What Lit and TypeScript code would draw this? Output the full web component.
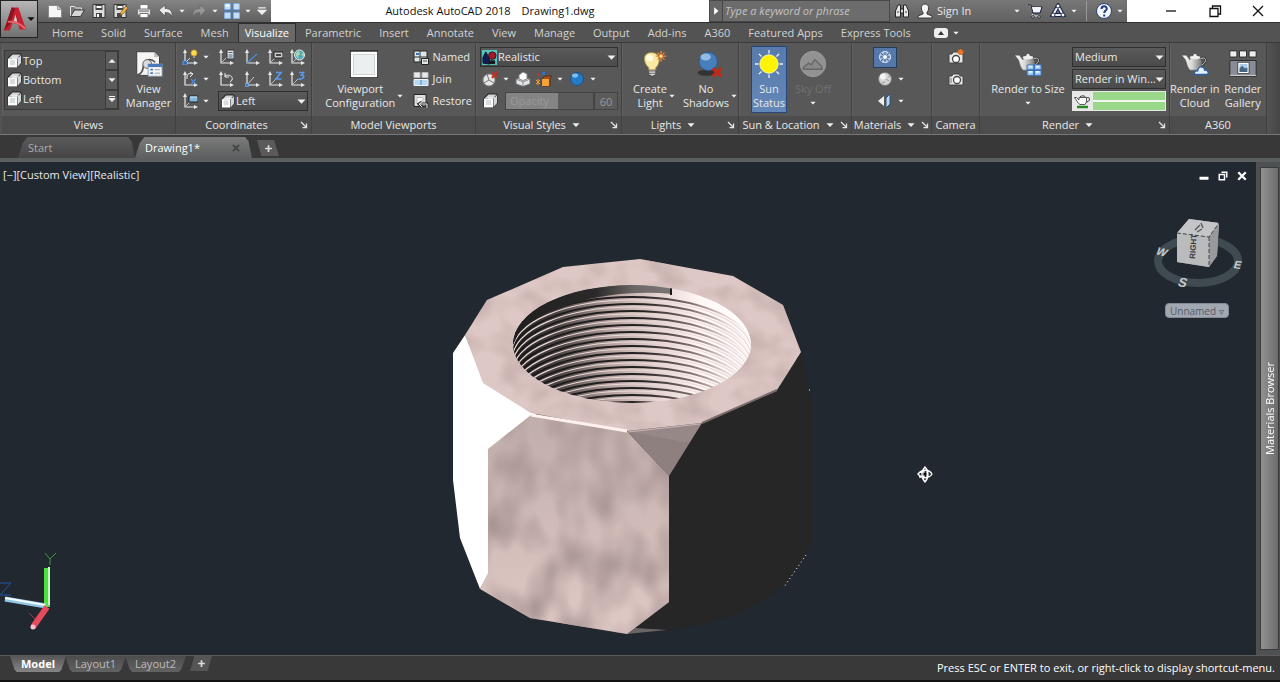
import { LitElement, html, svg, css } from "lit";
import { customElement, state } from "lit/decorators.js";
import { classMap } from "lit/directives/class-map.js";

const axes = svg`<path d="M3 3v11h11" fill="none" stroke="#e6e8ea" stroke-width="1.200"/><path d="M3 0L1 4h4zM16 14l-4-2v4z" fill="#e6e8ea"/>`;
const diag = svg`<path d="M3 14l6-6" stroke="#b9bdc0" fill="none"/>`;
const cube = svg`<path d="M2 5l4-4h9v9l-4 4.500H2z" fill="#2c2c2c" stroke="#202020"/><path d="M2.500 5.500l4-4h8l-3.500 4zM11.500 6l3.500-4v8l-3.500 4z" fill="#d3d7d9"/><path d="M2 5.500h9v9H2z" fill="#fbfbfb"/><path d="M6 5h7" stroke="#fff"/><path d="M4 7h5v5H4z" fill="#d9dcdd"/>`;
const teapot = svg`<path d="M22 8c7-3 9 4 0 8" fill="none" stroke="#3c3c3c" stroke-width="3"/><path d="M22 8c7-3 9 4 0 8" fill="none" stroke="#ddd"/><path d="M1 4l5 0 4 5c3-4 10-4 13 0 2 5 0 10-4 12h-8C7 19 7 13 5 9z" fill="url(#pot)" stroke="#555" stroke-width=".5"/><ellipse cx="16" cy="6.500" rx="6" ry="2" fill="#efefef"/><circle cx="16" cy="4" r="1.800" fill="#eee"/><defs><linearGradient id="pot"><stop stop-color="#fff"/><stop offset=".5" stop-color="#d9d9d7"/><stop offset="1" stop-color="#777"/></linearGradient></defs>`;
const burst = (x: number, y: number) => svg`<path transform="translate(${x} ${y})" d="M0-6V6M-6 0H6M-4-4l8 8M4-4l-8 8" stroke="#f28a30" stroke-width="1.600"/><circle cx=${x} cy=${y} r="2.500" fill="#ffe9a0" stroke="#d04a10"/>`;

const icons: Record<string, unknown> = {
  new: svg`<path d="M1.500 2.500h9l4 4v8h-13z" fill="#f6f6f6" stroke="#888"/><path d="M10.500 2.500v4h4" fill="#ccc" stroke="#999"/>`,
  open: svg`<path d="M1.500 13V3.500h4l1 1.500h6v3" fill="#777" stroke="#e9e9e9"/><path d="M1.500 13.500l4-6.500h10l-4 6.500z" fill="#d6d6d6" stroke="#3d3d3d"/>`,
  save: svg`<path d="M2 1.500h12v13H2z" fill="#ddd" stroke="#333"/><path d="M4.500 2h7v5h-7zM5 10h6v4.500H5z" fill="#454545"/><path d="M5.500 3h5v2h-5zM6 11h2v3H6z" fill="#fff"/>`,
  saveas: svg`<path d="M1 1.500h12v13H1z" fill="#ddd" stroke="#333"/><path d="M3.500 2h7v5h-7zM4 10h5v4.500H4z" fill="#454545"/><path d="M4.500 3h5v2h-5z" fill="#fff"/><path d="M7 12l1-3 5-6 2 2-5 6z" fill="#f4b548" stroke="#684516" stroke-width=".6"/>`,
  print: svg`<path d="M4 6V1.500h8V6" fill="#fff" stroke="#777"/><path d="M1.500 6h13v6h-13z" fill="#e2e2e2" stroke="#777"/><path d="M3 8h10" stroke="#666"/><path d="M4 10.500h8v4H4z" fill="#fff" stroke="#777"/>`,
  undo: svg`<path d="M1 7l6-5v3.500c5 0 7 2 7.500 8.500-1.500-3-3-4.500-7.500-4.500V13z" fill="#eaeaea" stroke="#444" stroke-width=".6"/>`,
  redo: svg`<path d="M15 7L9 2v3.500C4 5.500 2 7.500 1.500 14 3 11 4.500 9.500 9 9.500V13z" fill="#959595" stroke="#666" stroke-width=".6"/>`,
  tiles: svg`<path d="M0 0h7v7H0zM9 0h7v7H9zM0 9h7v7H0zM9 9h7v7H9z" fill="#c5dcf6" stroke="#4680c0"/><path d="M1.500 1.500h4v2h-4z" fill="#fff"/>`,
  binoc: svg`<path d="M1.500 14V8L4 2h2.500v12zM14.500 14V8L12 2H9.500v12z" fill="#e8e8e8" stroke="#252525"/><path d="M6.500 6h3v4h-3z" fill="#ddd" stroke="#222"/><path d="M3 9h2M11 9h2" stroke="#333"/>`,
  user: svg`<path d="M8 1c5 0 4 7 2 8v2l5 2v2H1v-2l5-2V9C4 8 3 1 8 1z" fill="#f4f4f4" stroke="#3b3b3b"/>`,
  cart: svg`<path d="M1 2h3l2 8h7l2-6H5" fill="#e4e6f0" stroke="#17213e"/><path d="M5 4l1.500 5h6L14 4z" fill="#f4f4f8"/><path d="M6 11l-1 2h8" fill="none" stroke="#eee"/><circle cx="6" cy="14" r="1.300" fill="#fff" stroke="#223"/><circle cx="12" cy="14" r="1.300" fill="#fff" stroke="#223"/>`,
  share: svg`<path d="M8 3L3 12h10z" fill="none" stroke="#182447" stroke-width="4"/><path d="M8 3L3 12h10z" fill="none" stroke="#ecedf5" stroke-width="2"/><g fill="#fff" stroke="#182447"><circle cx="8" cy="3" r="2"/><circle cx="3" cy="12" r="2"/><circle cx="13" cy="12" r="2"/></g>`,
  help: svg`<circle cx="8" cy="8" r="7.500" fill="#f4f6fb" stroke="#2d3f75"/><path d="M5.500 6c0-3.500 5.500-3.500 5.300-.3C10.700 7.500 8.300 7.700 8.200 10M8.200 11.500v2" fill="none" stroke="#1f3c82" stroke-width="2"/>`,
  cube,
  manager: svg`<path d="M2 2h20l6 6v21H2z" fill="#f5f5f5" stroke="#333"/><path d="M22 2v6h6z" fill="#bbb"/><path d="M2 29c7-2 7-7 8-13 2-5 8-7 13-2" fill="none" stroke="#555" stroke-width="2"/><circle cx="14" cy="16" r="5" fill="#dcdcdc" stroke="#555"/><path d="M15 16h16v14H15z" fill="#f4f4f4" stroke="#8193a7"/><path d="M15 16h16v3.500H15z" fill="#4a79bb"/><path d="M17.500 22.500h3M17.500 26.500h3" stroke="#4a79bb" stroke-width="2"/><path d="M22.500 22.500h6M22.500 26.500h6" stroke="#999"/>`,
  ucs: svg`${axes}<path d="M12 5v4M3 14l5-5" stroke="#ddd"/><circle cx="12" cy="4" r="3.200" fill="#f8dc56" stroke="#b26a1c" stroke-width=".7"/><path d="M1 12h4v4H1z" fill="#2d65b4" stroke="#7fb0ee" stroke-width=".7"/>`,
  ucsnamed: svg`${axes}${diag}<path d="M9 1h7v9H9z" fill="#e2e4e6" stroke="#333"/><path d="M10.500 3.500h4M10.500 6h4M10.500 8h4" stroke="#42607d"/>`,
  ucsworldline: svg`${axes}<path d="M3 14L13 5" stroke="#4b8bd8" stroke-width="1.300"/>`,
  ucsface: svg`${axes}${diag}<path d="M7 3h9v6H7z" fill="#ccc" stroke="#222"/><path d="M9 5h5v2H9z" fill="#444"/>`,
  ucsworld: svg`${axes}${diag}<circle cx="10.500" cy="6" r="5" fill="#57a7b8" stroke="#e2f2f0"/><path d="M7 4l3-2 1 3-2 2 1 3-3-3zM12 5l3-1v4z" fill="#a6d8ac"/>`,
  ucsx: svg`${axes}<path d="M5 8V6c0-3 2-4 5-3M8 1l3 2-3 3" fill="none" stroke="#eee"/><path d="M9 8l5 5M14 8l-5 5" stroke="#4b8bd8" stroke-width="1.300"/>`,
  ucsprev: svg`${axes}<path d="M7 5c6-3 10 3 5 6M7 2v4h4" fill="none" stroke="#eee"/>`,
  ucsorigin: svg`${axes}<path d="M3 14L10 6" stroke="#ccc"/><path d="M1.500 12.500h3v3h-3z" fill="#3c79ca" stroke="#7fb0ee" stroke-width=".7"/>`,
  ucsz: svg`${axes}${diag}<path d="M9 1.500h5L9 8h5.500" fill="none" stroke="#5a9aea" stroke-width="1.700"/>`,
  ucs3: svg`${axes}${diag}<path d="M10 1.500h4.500l-2 2.500c4 0 2 5-3 3.800" fill="none" stroke="#5a9aea" stroke-width="1.700"/>`,
  ucsview: svg`${axes}${diag}<path d="M7 3h9v6H7z" fill="#81b8dc" stroke="#222"/><path d="M8 4h7" stroke="#d3efff"/>`,
  viewport: svg`<path d="M0 0h32v32H0z" fill="#333"/><path d="M1 2h30v29H1z" fill="#fdfdfd"/><path d="M4 5h24v23H4z" fill="#eceff0" stroke="#c7ccce"/>`,
  named: svg`<path d="M1 2h13v11H1z" fill="#dfe6e8" stroke="#262626"/><path d="M7 2v11M1 8h13" stroke="#333"/><path d="M3 4h3v2H3z" fill="#396fb7"/><path d="M8.500 9.500h7v6h-7z" fill="#e5e5e5" stroke="#222"/><path d="M10 12h4" stroke="#555"/>`,
  join: svg`<path d="M1 1.500h6v5H1zM9 1.500h6v5H9z" fill="#e8ebed" stroke="#bbb"/><path d="M1 8.500h14v6H1z" fill="#b8d9ef" stroke="#e6f4ff"/><path d="M8 9v5" stroke="#5286bb"/>`,
  restore: svg`<path d="M1 1.500h12v12H1z" fill="#dfdfdf" stroke="#222"/><path d="M4 4.500h6v6H4z" fill="#f8f8f8" stroke="#bbb"/><path d="M7 11h7v4M9 9l-3 2 3 3" fill="none" stroke="#333" stroke-width="3"/><path d="M7 11h7v4M9 9l-3 2 3 3" fill="none" stroke="#eee"/>`,
  realistic: svg`<path d="M0 0h16v16H0z" fill="#58c3bb"/><path d="M1 14V8l3-6 4 7v6z" fill="#101b56" stroke="#07102f"/><circle cx="11" cy="6" r="4" fill="#a61828" stroke="#34101a"/><path d="M7 11h7v4H7z" fill="#181818"/>`,
  xray: svg`<circle cx="7" cy="9" r="6" fill="#e4e6e6" stroke="#888"/><path d="M7 9L2 12M7 9l5 3M7 9L5 3" stroke="#777"/><path d="M10 2l5 4M15 1l-5 6" stroke="#c62e1d" stroke-width="2"/>`,
  boxes: svg`<path d="M1 8l7-2 7 2v5l-7 2.500L1 13z" fill="#e4e6e8" stroke="#6a6a6a"/><path d="M1 8l7 3 7-3M8 11v4" fill="none" stroke="#8c9094"/><path d="M4 4l4-3 4 2v5L8 9.500 4 8z" fill="#fdfdfd" stroke="#888"/>`,
  orange: svg`<path d="M6 8l3-3h7l-2 3v7H6z" fill="#a85020" stroke="#573014"/><path d="M6 8h7v7H6z" fill="#f5a23d"/><path d="M1 2h3v3H1z" fill="#b43c27"/><path d="M6 1h3v3H6z" fill="#3a6dc4"/><path d="M0 9l4 4M4 9l-4 4M2 8v6" stroke="#f59a35"/>`,
  sphereblue: svg`<circle cx="8" cy="8" r="6.500" fill="#257ac6" stroke="#224e7b"/><ellipse cx="6" cy="4.500" rx="3" ry="2" fill="#7fc0f2"/>`,
  bulb: svg`<path d="M13 3c13 0 9 15 5 17v4h-8v-4C4 15 2 3 13 3z" fill="#f8e9a3" stroke="#ae9550"/><ellipse cx="11" cy="9" rx="4" ry="4" fill="#fffbdc"/><path d="M10 23h8v5l-4 2-4-2z" fill="#eee" stroke="#444"/><path d="M10 25h8M10 27h8" stroke="#666"/>${burst(24, 7)}`,
  shadow: svg`<ellipse cx="12" cy="26" rx="10" ry="3.500" fill="#333"/><circle cx="14" cy="13" r="10.500" fill="#477ebd" stroke="#2b588c"/><ellipse cx="11" cy="8" rx="6" ry="4" fill="#a9cbef" opacity=".8"/><path d="M19 21l10 9M29 21l-10 9" stroke="#c52717" stroke-width="3.500"/>`,
  sun: svg`<path d="M16 0v4M16 28v4M0 16h4M28 16h4M4.400 4.400l3 3M24.500 24.500l3 3M4.400 27.600l3-3M24.500 7.500l3-3" stroke="#eaf1ff" stroke-width="1.500"/><circle cx="16" cy="16" r="10.500" fill="#fff500" stroke="#fff9ac"/>`,
  sky: svg`<circle cx="16" cy="16" r="14.500" fill="#929292" stroke="#9c9c9c"/><path d="M5 20l6-5 3 2 4-6 8 8v3H5z" fill="#888" stroke="#666" stroke-width="1.500"/>`,
  texture: svg`<circle cx="8" cy="8" r="5.500" fill="#9fb6d4" stroke="#dfeaff"/><path d="M4 4l8 8M12 4l-8 8M3 8h10M8 3v10" stroke="#3f5f8b"/><circle cx="8" cy="8" r="2" fill="#fff"/>`,
  ball: svg`<circle cx="8" cy="8" r="6.500" fill="#d3d3d1" stroke="#777"/><circle cx="6" cy="5.500" r="3" fill="#f2f2f0"/><path d="M9 8l3 2M5 12l3-1M11 5l2 1" stroke="#999"/>`,
  mirror: svg`<path d="M1 8l6-5v10z" fill="#f0f0f0"/><path d="M9 5l4-4v10l-4 4z" fill="#bcd6f4" stroke="#2e5283"/>`,
  camera: svg`<path d="M1 5h3l1-2h6l1 2h3v9H1z" fill="#e7e7e7" stroke="#444"/><circle cx="9" cy="9" r="3.500" fill="#fff" stroke="#444" stroke-width="1.300"/><path d="M3 7v5" stroke="#777"/>`,
  cameranew: svg`<path d="M1 5h3l1-2h5l1 2h4v9H1z" fill="#e7e7e7" stroke="#444"/><circle cx="8" cy="10" r="3.500" fill="#fff" stroke="#444" stroke-width="1.300"/><path d="M12.500 0v6M9.500 3h6M10.500 1l4 4M14.500 1l-4 4" stroke="#f17624" stroke-width="1.300"/>`,
  rendersize: svg`<g transform="translate(0 2)">${teapot}</g><path d="M15 17h16v12H15z" fill="#9fc7f4" stroke="#3770b5"/><path d="M23 17v12M15 23h16" stroke="#3770b5" stroke-width="2"/><path d="M17 19h4M25 19h4M17 25h4M25 25h4" stroke="#e4f3ff" stroke-width="2"/>`,
  cloud: svg`<g transform="translate(0 2)">${teapot}</g><path d="M16 28c-2-3 1-5 3-4 1-7 8-5 8-1 4-1 6 5 2 5z" fill="#e6effd" stroke="#2f5fa2" stroke-width="1.500"/>`,
  gallery: svg`<path d="M1 1h8v7H1zM12 1h8v7h-8zM23 1h8v7h-8z" fill="#eee" stroke="#252525"/><path d="M1 12h30v18H1z" fill="#888e98" stroke="#252525"/><path d="M10 14h13v13H10z" fill="#fff" stroke="#333"/><path d="M12 16h9v9h-9z" fill="#a9cbe7"/><path d="M12 25v-4l3-3 3 3 3-1v5z" fill="#466482"/><path d="M1 29h30" stroke="#ddd"/>`,
  potline: svg`<path d="M12.500 5c4-2.500 4 4 0 4" fill="none" stroke="#333"/><path d="M.5 4.500h2L5 7V4.500h7.500V9L11 11.500H6C4 10.500 3 8 .5 4.500z" fill="#fafafa" stroke="#333" stroke-width=".8"/><path d="M6 4c1-1.500 4.500-1.500 5.500 0" fill="none" stroke="#333"/><path d="M3 14h11" stroke="#2b8a25" stroke-width="2.500"/>`,
  down: svg`<path d="M1 4.500h14L8 12z" fill="#f0f0f0"/>`,
  up: svg`<path d="M1 11.500h14L8 4z" fill="#f0f0f0"/>`,
  right: svg`<path d="M5 2v12l7-6z" fill="#fff"/>`,
  more: svg`<path d="M2 3h12M2 7h12l-6 6z" fill="#f0f0f0" stroke="#f0f0f0" stroke-width="2"/>`,
  launch: svg`<path d="M2 2l10 10M13 5v8H5" fill="none" stroke="#e5e5e5" stroke-width="2.500"/>`,
  plus: svg`<path d="M8 2v12M2 8h12" stroke="#dcdcdc" stroke-width="3"/>`,
  close: svg`<path d="M3 3l10 10M13 3L3 13" stroke="currentColor" stroke-width="1.300"/>`,
  bold: svg`<path d="M3 3l10 10M13 3L3 13" stroke="currentColor" stroke-width="3"/>`,
  restorewin: svg`<path d="M3 5.500h8v8H3zM5.500 5V3h8v8H11" fill="none" stroke="currentColor" stroke-width="1.300"/>`,
  restorebold: svg`<path d="M3 6h7v7H3zM6 3h7v7" fill="none" stroke="#fff" stroke-width="2"/>`,
  min: svg`<path d="M3 8h10" stroke="currentColor" stroke-width="1.300"/>`,
  minbold: svg`<path d="M2 11h12" stroke="#fff" stroke-width="4"/>`,
  ribbonmin: svg`<rect x="1" y="3" width="14" height="10" rx="3" fill="#eee"/><path d="M5 10h6L8 6z" fill="#333"/>`,
};

const ico = (name: string, size = "m") =>
  html`<svg class="i ${size}" viewBox=${/^(manager|viewport|bulb|shadow|sun|sky|rendersize|cloud|gallery)$/.test(name) ? "0 0 32 32" : "0 0 16 16"} aria-hidden="true">${icons[name]}</svg>`;
const arrow = () => ico("down", "t");

@customElement("app-root")
export class AppRoot extends LitElement {
  @state() private tab = "Visualize";

  static styles = css`
    :host { display: flex; flex-direction: column; min-height: 100vh; background: #393939; color: #e8e8e8; font: 11px/14px "Open Sans", "Noto Sans", sans-serif; overflow: hidden; }
    * { box-sizing: border-box; }
    button, select, input { font: inherit; color: inherit; margin: 0; }
    button { background: none; border: 0; padding: 0; display: flex; align-items: center; white-space: nowrap; }
    a { color: inherit; text-decoration: none; }
    .i { display: block; flex: none; width: 16px; height: 16px; }
    .i.t { width: 6px; height: 6px; }
    .i.s { width: 10px; height: 10px; }
    .i.l { width: 28px; height: 28px; }
    .head { display: grid; grid-template-columns: 38px 1fr; grid-template-rows: 23px 19px; background: #535353; }
    .logo { grid-row: span 2; height: 38px; border: 1px solid #222; background: linear-gradient(#b6b6b6, #707070); justify-content: space-between; padding: 0 2px 0 3px; }
    .logo .mark { width: 24px; height: 28px; }
    .logo .i { width: 8px; height: 8px; filter: invert(1); }
    .title { display: flex; background: #fff; border-bottom: 1px solid #333; min-width: 0; }
    .quick { display: flex; align-items: center; width: 233px; padding: 0 4px 0 9px; justify-content: space-between; background: linear-gradient(#858585, #5e5e5e); }
    .name { flex: 1; display: flex; justify-content: center; align-items: center; gap: 11px; color: #111; white-space: pre; }
    .find { display: flex; width: 181px; background: #777; border: 1px solid #484848; }
    .find button { width: 12px; justify-content: center; background: #666; }
    .find input { flex: 1; min-width: 0; background: #6c6c6c; border: 0; border-left: 1px solid #444; padding: 0 2px; font-style: italic; outline: 0; }
    .find input::placeholder { color: #c3c3c3; opacity: 1; }
    .account { display: flex; align-items: center; gap: 7px; width: 237px; padding: 0 4px; background: linear-gradient(#777, #606060); }
    .account .sign { flex: 1; justify-content: space-between; }
    .account .sign span { flex: 1; text-align: left; padding-left: 4px; }
    .sep { align-self: stretch; border-left: 1px solid #999; margin: 1px 2px; }
    .win { display: flex; width: 153px; padding-left: 22px; color: #111; }
    .win button { flex: 1; justify-content: center; }
    .tabs { display: flex; align-items: stretch; padding-left: 5px; color: #d2d2d2; }
    .tabs button { padding: 0 8px 1px; border: 1px solid transparent; border-bottom: 0; }
    .tabs button.on { color: #fff; background: #696969; border-color: #2f2f2f; padding: 0 6px 1px; }
    .tabs .mini { gap: 4px; padding-left: 12px; }
    .ribbon { display: flex; border-top: 1px solid #3a3a3a; border-bottom: 1px solid #777; background: linear-gradient(90deg, #535353 99%, #464646); padding: 0 14px 0 2px; height: 93px; overflow: hidden; }
    .panel { display: flex; flex-direction: column; flex: none; border-right: 1px solid #414141; box-shadow: inset 1px 0 #616161; background: #585858; }
    .body { display: flex; flex: 1; padding: 3px 3px 0 4px; }
    .panel h2 { height: 18px; margin: 0; font: inherit; display: flex; align-items: center; justify-content: center; gap: 6px; background: #4d4d4d; white-space: nowrap; padding: 0 3px 1px; }
    .panel h2 > span { flex: 1; display: flex; gap: 6px; justify-content: center; align-items: center; }
    .panel h2 .i { width: 8px; height: 8px; }
    .w-views { width: 174px; } .w-coord { width: 136px; } .w-port { width: 164px; } .w-style { width: 146px; }
    .w-light { width: 117px; } .w-sun { width: 113px; } .w-mat { width: 80px; } .w-cam { width: 48px; } .w-render { width: 190px; } .w-cloud { width: 97px; }
    .w-cloud .body { padding: 3px 0 0; }
    .w-light .body { padding-right: 0; }
    .w-sun .body { padding-left: 12px; }
    .big { flex-direction: column; height: 67px; line-height: 14px; text-align: center; flex: 1; }
    .big .i.l { margin: 4px 0; }
    .big .cap { display: flex; align-items: center; gap: 2px; min-height: 28px; }
    .big .cap.col { flex-direction: column; gap: 4px; }
    .big.on { flex: 0 0 36px; background: linear-gradient(#587bab, #6387b8); border: 1px solid #26487a; }
    .big.on .i.l { margin-top: 3px; }
    .big.off { flex: 0 0 52px; color: #717171; }
    .list { width: 115px; height: 60px; margin: 4px 6px 0 -2px; display: grid; grid-template-columns: 1fr 13px; grid-template-rows: repeat(3, 1fr); background: #505050; border: 1px solid #3a3a3a; }
    .list button { gap: 1px; padding-left: 1px; }
    .list button.scroll { justify-content: center; padding: 0; border: 1px solid #3b3b3b; background: #5b5b5b; }
    .list button.scroll .i { width: 8px; height: 8px; }
    .coords { display: grid; grid-template-columns: 36px 26px 23px 22px 19px; grid-template-rows: repeat(3, 22px); align-items: center; padding-left: 2px; }
    .coords .pick { grid-column: span 4; }
    .arrowed { gap: 5px; }
    .pick { display: grid; height: 20px; }
    .pick > * { grid-area: 1 / 1; }
    .pick select { appearance: none; width: 100%; min-width: 0; padding: 0 9px 0 2px; background: linear-gradient(#5a5a5a, #4b4b4b); border: 1px solid #303030; border-radius: 0; }
    .pick.lead select { padding-left: 17px; }
    .pick > .i { align-self: center; margin-left: 2px; pointer-events: none; z-index: 1; width: 15px; height: 15px; }
    .pick > .i.s { justify-self: end; margin-right: 2px; width: 9px; height: 9px; }
    .rows { display: grid; grid-template-rows: repeat(3, 22px); align-items: center; }
    .rows .named { gap: 4px; }
    .styles { width: 100%; }
    .strip { display: flex; justify-content: space-between; padding: 0 22px 0 2px; }
    .fade { display: flex; align-items: center; gap: 7px; padding-left: 2px; }
    .fade label { flex: 1; display: grid; height: 18px; align-items: center; border: 1px solid #444; color: #999; }
    .fade label > * { grid-area: 1 / 1; }
    .fade label span { padding-left: 4px; z-index: 1; }
    .fade input[type="range"] { appearance: none; width: 100%; height: 16px; min-width: 0; background: linear-gradient(90deg, #848484 60%, #5b5b5b 60%); }
    .fade input[type="range"]::-webkit-slider-thumb { appearance: none; width: 0; }
    .fade .num { width: 24px; height: 18px; margin-left: -7px; padding: 0; text-align: center; background: #5b5b5b; border: 1px solid #444; color: #999; }
    .icons { width: 100%; justify-items: center; }
    .w-mat .icons { justify-items: start; padding-left: 21px; }
    .icons .on { padding: 1px 3px; margin-left: -4px; height: 21px; background: #5478a9; border: 1px solid #253c60; }
    .outs { width: 94px; display: grid; gap: 2px; align-content: start; padding-top: 1px; }
    .outs .pick { height: 20px; white-space: nowrap; }
    .gauge { display: flex; align-items: center; height: 20px; background: #e8e8e8; padding: 1px 1px 1px 2px; gap: 3px; }
    .bar { flex: 1; height: 100%; background: linear-gradient(#99d888 42%, #f2f6f0 42% 58%, #99d888 58%); }
    .files { display: flex; align-items: flex-end; height: 27px; padding: 0 18px 4px; background: linear-gradient(#383838 23px, #5c5f60 23px); }
    .files .doc { height: 21px; display: flex; align-items: center; justify-content: space-between; width: 117px; padding: 0 11px 0 10px; background: linear-gradient(#5a5a5a, #454545); color: #aaa; clip-path: polygon(0 100%, 4% 30%, 8% 0, 94% 0, 97% 20%, 100% 100%); }
    .files .doc.on { background: linear-gradient(#7b7b7b, #5c5f60); color: #fff; }
    .files .doc .i { width: 10px; height: 10px; color: #444; }
    .files .add { width: 22px; height: 16px; margin: 0 0 2px 5px; justify-content: center; background: #5a5a5a; clip-path: polygon(0 0, 78% 0, 100% 100%, 20% 100%); }
    .add .i { width: 9px; height: 9px; }
    .main { flex: 1; display: grid; grid-template-columns: 1fr 24px; min-height: 493px; }
    .view { position: relative; background: #212830; overflow: hidden; }
    .scene { position: absolute; inset: 0; width: 100%; height: 100%; }
    .tag { position: absolute; left: 3px; top: 6px; }
    .inner { position: absolute; right: 8px; top: 8px; display: flex; gap: 7px; color: #fff; }
    .inner .i { width: 12px; height: 12px; }
    .compass { position: absolute; right: 10px; top: 50px; width: 96px; height: 80px; font: bold 11px "Liberation Sans", sans-serif; fill: #c7cacc; }
    .unnamed { position: absolute; right: 27px; top: 141px; width: 64px; height: 15px; border-radius: 4px; border: 1px solid #858b94; background: #a2a8b2; color: #555c66; font-size: 10px; justify-content: space-between; padding: 0 4px; }
    .axis { position: absolute; left: 0; bottom: 20px; width: 64px; height: 88px; }
    .side { background: #4e5152; padding: 5px 1px 5px 4px; display: flex; }
    .side button { flex: 1; border: 1px solid #3b3b3b; background: linear-gradient(90deg, #6b6b6b, #929292); writing-mode: vertical-rl; transform: rotate(180deg); justify-content: center; color: #fff; }
    .foot { display: flex; justify-content: space-between; height: 27px; background: #393939; border-top: 1px solid #5a5a5a; border-bottom: 2px solid #111; }
    .lay { display: flex; padding-left: 10px; }
    .lay a { height: 16px; display: flex; align-items: center; justify-content: center; width: 61px; margin-right: -1px; color: #bbb; background: linear-gradient(#4c4c4c, #626262); clip-path: polygon(0 0, 100% 0, 92% 85%, 88% 100%, 12% 100%, 8% 85%); }
    .lay a.on { width: 56px; background: linear-gradient(#565656, #858585); color: #fff; font-weight: 700; }
    .lay .add { width: 22px; height: 15px; margin-left: 5px; background: #555; justify-content: center; clip-path: polygon(20% 0, 100% 0, 80% 100%, 0 100%); }
    .prompt { display: flex; align-items: center; color: #fff; padding-right: 5px; white-space: nowrap; }
  `;

  private select(label: string, value: string, icon = "") {
    return html`<label class="pick ${icon ? "lead" : ""}">
      <select aria-label=${label}><option>${value}</option></select>
      ${icon ? ico(icon) : ""}${ico("down", "s")}
    </label>`;
  }

  private panel(cls: string, title: string, body: unknown, menu = false, launch = false) {
    return html`<section class="panel ${cls}">
      <div class="body">${body}</div>
      <h2><span>${title}${menu ? ico("down", "s") : ""}</span>${launch ? ico("launch", "s") : ""}</h2>
    </section>`;
  }

  private tool(label: string, icon: string, menu = false) {
    return html`<button class="arrowed" aria-label=${label}>${ico(icon)}${menu ? arrow() : ""}</button>`;
  }

  private big(icon: string, a: string, b = "", menu = false, cls = "") {
    return html`<button class="big ${cls}">${ico(icon, "l")}
      ${b
        ? html`<span class="cap"><span>${a}<br />${b}</span>${menu ? arrow() : ""}</span>`
        : html`<span class="cap col"><span>${a}</span>${menu ? arrow() : ""}</span>`}
    </button>`;
  }

  private threads() {
    return Array.from({ length: 16 }, (_, n) => {
      const y = 347 + n * 7;
      return svg`<path d="M513 ${y}A119 50 0 0 1 751 ${y}" stroke="url(#groove)" stroke-width="2"/><path d="M513 ${y + 3}A119 50 0 0 1 751 ${y + 3}" stroke="#eadad7" stroke-width="1.200"/>`;
    });
  }

  private scene() {
    return html`<svg class="scene" viewBox="0 162 1256 493" role="img" aria-label="Hexagonal nut">
      <defs>
        <filter id="mottle" x="0" y="0" width="1" height="1" color-interpolation-filters="sRGB">
          <feTurbulence type="fractalNoise" baseFrequency=".034 .022" numOctaves="2" seed="8" />
          <feColorMatrix values="0 0 0 0 .65  0 0 0 0 .57  0 0 0 0 .57  1.8 0 0 0 -.62" result="n" />
          <feComposite in="n" in2="SourceAlpha" operator="in" result="c" />
          <feMerge><feMergeNode in="SourceGraphic" /><feMergeNode in="c" /></feMerge>
        </filter>
        <filter id="soft" x="0" y="0" width="1" height="1" color-interpolation-filters="sRGB">
          <feTurbulence type="fractalNoise" baseFrequency=".034 .045" numOctaves="2" seed="3" />
          <feColorMatrix values="0 0 0 0 .72  0 0 0 0 .63  0 0 0 0 .62  1.3 0 0 0 -.52" result="n" />
          <feComposite in="n" in2="SourceAlpha" operator="in" result="c" />
          <feMerge><feMergeNode in="SourceGraphic" /><feMergeNode in="c" /></feMerge>
        </filter>
        <linearGradient id="bore" gradientUnits="userSpaceOnUse" x1="513" x2="751" y1="0" y2="0"><stop stop-color="#252323" /><stop offset=".2" stop-color="#4e4746" /><stop offset=".42" stop-color="#b9a6a3" /><stop offset=".62" stop-color="#e6d5d2" /><stop offset=".78" stop-color="#fff6f4" /><stop offset="1" stop-color="#fff" /></linearGradient>
        <linearGradient id="groove" gradientUnits="userSpaceOnUse" x1="513" x2="751" y1="0" y2="0"><stop stop-color="#191919" /><stop offset=".55" stop-color="#252222" /><stop offset=".75" stop-color="#83706e" /><stop offset=".9" stop-color="#ead9d6" /><stop offset="1" stop-color="#fff" /></linearGradient>
        <linearGradient id="rim" gradientUnits="userSpaceOnUse" x1="520" x2="672" y1="0" y2="0"><stop stop-color="#202020" /><stop offset=".5" stop-color="#2b2929" /><stop offset=".75" stop-color="#6c6666" /><stop offset="1" stop-color="#7c7575" /></linearGradient>
        <linearGradient id="base" gradientUnits="userSpaceOnUse" x1="0" x2="0" y1="415" y2="634"><stop stop-color="#c0aeab" /><stop offset=".5" stop-color="#d0bbb8" /><stop offset="1" stop-color="#e0cac6" /></linearGradient>
        <clipPath id="hole"><ellipse cx="632" cy="344" rx="119" ry="59" /></clipPath>
      </defs>
      <path d="M702 423L777 390 801 352 808 388 811 402V545L805 556 784 587 740 613 700 625 665 631 627 634 669 602V476z" fill="#262626" />
      <path d="M627 634l8-6 32 2z" fill="#696564" />
      <path d="M465 335L453 353V480L460 538 480 589 489 573V450L540 418 531 410 486 380z" fill="#fff" />
      <path d="M531 415L488 449V573L480 589 530 618 627 634 669 602V476L627 431z" fill="url(#base)" filter="url(#mottle)" />
      <path d="M627 431L702 423 669 476z" fill="#8d807f" />
      <path d="M627 431L702 423 689 443z" fill="#a39491" opacity=".4" />
      <path d="M640 259L563 267 487 300 465 335 483 383 531 413 627 431 702 423 777 390 801 352 783 305 733 276z" fill="#dec8c5" filter="url(#soft)" />
      <path d="M702 423L777 390" stroke="#776c6b" stroke-width="2" />
      <path d="M531 415L627 431" stroke="#fff1ee" stroke-width="3" /><path d="M628 432l72-8" stroke="#c9b6b3" />
      <g clip-path="url(#hole)" fill="none">
        <ellipse cx="632" cy="344" rx="119" ry="59" fill="url(#bore)" />
        ${this.threads()}
        <path d="M513 345A119 59 0 0 1 672 288V294C610 288 550 305 520 330z" fill="url(#rim)" />
        <path d="M671 288v7" stroke="#181818" stroke-width="2" />
      </g>
      <path d="M806 555l-22 32" stroke="#fff" stroke-dasharray="1 3" /><path d="M809 390h1" stroke="#fff" />
      <g transform="translate(925 474)" fill="none"><path d="M0-7C-4-3-4 4 0 8 4 4 4-3 0-7zM-7 0C-3-5 4-5 7 0 4 5-3 5-7 0zM-6 3h5v-7M2-5V3" stroke="#fff" stroke-width="1.300" /><circle r="1.500" fill="#000" /></g>
    </svg>`;
  }

  render() {
    const tabs = ["Home", "Solid", "Surface", "Mesh", "Visualize", "Parametric", "Insert", "Annotate", "View", "Manage", "Output", "Add-ins", "A360", "Featured Apps", "Express Tools"];
    return html`
      <header class="head">
        <button class="logo" aria-label="Application menu">
          <svg class="mark" viewBox="0 0 24 28" aria-hidden="true"><path d="M8 2h7l8 23h-7l-1-5-6-2-3 8H0z" fill="#c91f31" /><path d="M8 2l4 1-6 17-6 6zM12 8l3 10h-5z" fill="#8b1423" /><path d="M12 9l2 8-4-1z" fill="#d8c8c8" /><path d="M4 17c6-1 12 1 18 7" fill="none" stroke="#ee6870" stroke-width="2" /></svg>
          ${arrow()}
        </button>
        <div class="title">
          <div class="quick">
            ${["new", "open", "save", "saveas", "print"].map((n) => this.tool(n, n))}
            ${this.tool("undo", "undo", true)}${this.tool("redo", "redo", true)}${this.tool("workspace", "tiles", true)}
            <button aria-label="Customize">${ico("more", "s")}</button>
          </div>
          <div class="name"><span>Autodesk AutoCAD 2018</span><span>Drawing1.dwg</span></div>
          <div class="find"><button aria-label="Expand search">${ico("right", "s")}</button><input aria-label="Search" placeholder="Type a keyword or phrase" /></div>
          <div class="account">
            ${this.tool("Search", "binoc")}
            <button class="sign">${ico("user")}<span>Sign In</span>${arrow()}</button>
            ${this.tool("Store", "cart")}${this.tool("Connect", "share", true)}
            <span class="sep"></span>${this.tool("Help", "help", true)}
          </div>
          <div class="win"><button aria-label="Minimize">${ico("min")}</button><button aria-label="Restore window">${ico("restorewin")}</button><button aria-label="Close">${ico("close")}</button></div>
        </div>
        <nav class="tabs">
          ${tabs.map((t) => html`<button class=${classMap({ on: t === this.tab })} @click=${() => (this.tab = t)}>${t}</button>`)}
          <button class="mini" aria-label="Minimize ribbon">${ico("ribbonmin")}${arrow()}</button>
        </nav>
      </header>

      <div class="ribbon">
        ${this.panel("w-views", "Views", html`
          <div class="list">
            ${[["Top", "up"], ["Bottom", "down"], ["Left", "more"]].map(([v, s]) => html`<button>${ico("cube")}${v}</button><button class="scroll" aria-label=${"Scroll " + s}>${ico(s, "s")}</button>`)}
          </div>
          ${this.big("manager", "View", "Manager")}`)}
        ${this.panel("w-coord", "Coordinates", html`
          <div class="coords">
            ${this.tool("UCS icon", "ucs", true)}${this.tool("Named UCS", "ucsnamed")}${this.tool("UCS", "ucsworldline")}${this.tool("Face", "ucsface")}${this.tool("World", "ucsworld")}
            ${this.tool("X", "ucsx", true)}${this.tool("Previous", "ucsprev")}${this.tool("Origin", "ucsorigin")}${this.tool("Z axis", "ucsz")}${this.tool("3 point", "ucs3")}
            ${this.tool("View UCS", "ucsview", true)}${this.select("Coordinate system", "Left", "cube")}
          </div>`, false, true)}
        ${this.panel("w-port", "Model Viewports", html`
          ${this.big("viewport", "Viewport", "Configuration", true)}
          <div class="rows">
            ${[["named", "Named"], ["join", "Join"], ["restore", "Restore"]].map(([i, t]) => html`<button class="named">${ico(i)}${t}</button>`)}
          </div>`)}
        ${this.panel("w-style", "Visual Styles", html`
          <div class="rows styles">
            ${this.select("Visual style", "Realistic", "realistic")}
            <div class="strip">${this.tool("X-ray", "xray", true)}${this.tool("Faces", "boxes")}${this.tool("Edges", "orange", true)}${this.tool("Material", "sphereblue", true)}</div>
            <div class="fade">${ico("cube")}<label><span>Opacity</span><input type="range" value="60" disabled /></label><input class="num" aria-label="Opacity value" value="60" disabled /></div>
          </div>`, true, true)}
        ${this.panel("w-light", "Lights", html`${this.big("bulb", "Create", "Light", true)}${this.big("shadow", "No", "Shadows", true)}`, true, true)}
        ${this.panel("w-sun", "Sun & Location", html`${this.big("sun", "Sun", "Status", false, "on")}${this.big("sky", "Sky Off", "", true, "off")}`, true, true)}
        ${this.panel("w-mat", "Materials", html`<div class="rows icons"><button class="on" aria-label="Textures">${ico("texture")}</button>${this.tool("Materials", "ball", true)}${this.tool("Mapping", "mirror", true)}</div>`, true, true)}
        ${this.panel("w-cam", "Camera", html`<div class="rows icons">${this.tool("Create camera", "cameranew")}${this.tool("Show cameras", "camera")}</div>`)}
        ${this.panel("w-render", "Render", html`
          ${this.big("rendersize", "Render to Size", "", true)}
          <div class="outs">${this.select("Preset", "Medium")}${this.select("Render target", "Render in Win...")}<div class="gauge">${ico("potline")}<div class="bar"></div></div></div>`, true, true)}
        ${this.panel("w-cloud", "A360", html`${this.big("cloud", "Render in", "Cloud")}${this.big("gallery", "Render", "Gallery")}`)}
      </div>

      <nav class="files">
        <a class="doc" href="#start">Start</a>
        <a class="doc on" href="#drawing1">Drawing1*${ico("bold")}</a>
        <button class="add" aria-label="New drawing">${ico("plus")}</button>
      </nav>

      <main class="main">
        <div class="view">
          ${this.scene()}
          <span class="tag">[−][Custom View][Realistic]</span>
          <div class="inner"><button aria-label="Minimize view">${ico("minbold")}</button><button aria-label="Restore view">${ico("restorebold")}</button><button aria-label="Close view">${ico("bold")}</button></div>
          <svg class="compass" viewBox="0 0 96 80" aria-hidden="true">
            <ellipse cx="48" cy="49" rx="40" ry="22" fill="none" stroke="#3f4b50" stroke-width="8" />
            <path d="M27 21L39 7 69 11 67 44 59 55 27 50z" fill="#a9abad" />
            <path d="M27 21L39 7 69 11 59 25z" fill="#c3c5c7" /><path d="M59 25L69 11 67 43 59 55z" fill="#97999b" /><path d="M27 21L59 25V55L27 50z" fill="#b9bbbd" />
            <path d="M27 21l32 4 10-14M59 25v30" fill="none" stroke="#444" stroke-dasharray="4 2" />
            <text transform="translate(45 47) rotate(-86)" font-size="8" fill="#393c3f">RIGHT</text>
            <path d="M45 18l5-5M47 20l5-3M51 11l2 5" stroke="#555" stroke-width="1.300" />
            <text transform="translate(5 42) rotate(15) skewX(-15)">W</text><text transform="translate(83 56) rotate(8) skewX(-10)">E</text><text transform="translate(27 74) rotate(10) skewX(-10)" font-size="13">S</text>
          </svg>
          <button class="unnamed">Unnamed <span>▿</span></button>
          <svg class="axis" viewBox="0 0 64 88" aria-hidden="true">
            <path d="M50 18v-6M50 12l-5-6M50 12l6-6" stroke="#3b9d43" fill="none" /><path d="M0 36h11L0 48h11" fill="none" stroke="#2057a4" /><path d="M29 66l8 8" stroke="#a92b43" />
            <path d="M47 60V21" stroke="#4ce13f" stroke-width="6" /><path d="M49 58V20" stroke="#c5ffc0" stroke-width="2" />
            <path d="M46 59L5 52" stroke="#91c6e4" stroke-width="5" /><path d="M45 58L5 51" stroke="#f3fbff" stroke-width="2" />
            <path d="M47 60L33 80" stroke="#e64a5f" stroke-width="6" /><circle cx="33" cy="80" r="2.500" fill="#ffc4cb" />
          </svg>
        </div>
        <aside class="side"><button>Materials Browser</button></aside>
      </main>

      <footer class="foot">
        <nav class="lay"><a class="on" href="#model">Model</a><a href="#layout1">Layout1</a><a href="#layout2">Layout2</a><button class="add" aria-label="New layout">${ico("plus")}</button></nav>
        <div class="prompt" role="status">Press ESC or ENTER to exit, or right-click to display shortcut-menu.</div>
      </footer>`;
  }
}
